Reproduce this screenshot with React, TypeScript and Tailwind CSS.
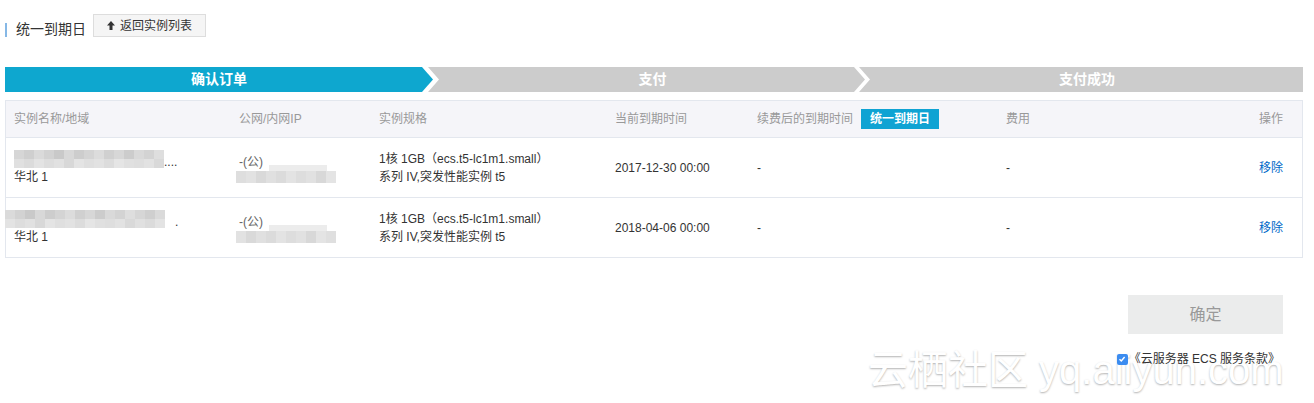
import React from 'react';

const font = "font-['Liberation_Sans','Noto_Sans_CJK_SC',sans-serif]";

const shadesA = ['#d6d6d6', '#cfcfcf', '#dadada', '#d2d2d2', '#c9c9c9', '#d8d8d8', '#cdcdcd', '#d4d4d4', '#dcdcdc', '#d0d0d0', '#d7d7d7', '#cccccc', '#d9d9d9', '#d3d3d3', '#dedede'];
const shadesB = ['#dedede', '#e2e2e2', '#d9d9d9', '#e0e0e0', '#dbdbdb', '#e3e3e3', '#dddddd', '#e1e1e1', '#d8d8d8', '#e4e4e4', '#dfdfdf', '#e2e2e2', '#dcdcdc', '#e5e5e5', '#e0e0e0'];

// blurred text placeholder, as in the screenshot
function Mosaic({ cols, offset = 0 }: { cols: number; offset?: number }) {
  return (
    <div className="flex flex-col">
      {[shadesA, shadesB].map((row, r) => (
        <div key={r} className="flex">
          {Array.from({ length: cols }).map((_, i) => (
            <div key={i} className="h-[9px] w-[10px]" style={{ backgroundColor: row[(i + offset + r * 3) % row.length] }} />
          ))}
        </div>
      ))}
    </div>
  );
}

const steps = [
  { label: '确认订单', active: true },
  { label: '支付', active: false },
  { label: '支付成功', active: false },
];

const rows = [
  { date: '2017-12-30 00:00', tail: '....', wide: false },
  { date: '2018-04-06 00:00', tail: '.', wide: true },
];

export default function App() {
  return (
    <div className={`relative min-h-[403px] bg-white pl-[5px] pr-[11px] pt-[14px] text-[#333] ${font}`}>
      <div className="pointer-events-none absolute left-[868px] top-[346px] whitespace-nowrap text-[40px] leading-[48px] text-white [text-shadow:0_1px_2px_rgba(0,0,0,0.3)]">
        云栖社区 yq.aliyun.com
      </div>

      <div className="flex h-[23px] items-center">
        <div className="mt-[8px] h-[14px] w-[2px] bg-[#86b8e6]" />
        <span className="ml-[9px] mt-[8px] text-[14px] text-[#333]">统一到期日</span>
        <button className="ml-[7px] flex h-[23px] w-[113px] items-center justify-center gap-[5px] border border-[#ddd] bg-[#f5f5f5] text-[12px] text-[#333]">
          <svg width="8" height="9" viewBox="0 0 8 9">
            <path d="M4 0 L8 4.5 H5.5 V9 H2.5 V4.5 H0 Z" fill="#333" />
          </svg>
          返回实例列表
        </button>
      </div>

      <div className="mt-[30px] flex h-[25px]">
        {steps.map((s, i) => (
          <div
            key={s.label}
            className={`flex h-full items-center justify-center text-[14px] font-bold text-white ${
              i === 0
                ? 'w-[428px] bg-[#0ea7cf] [clip-path:polygon(0_0,calc(100%_-_11px)_0,100%_50%,calc(100%_-_11px)_100%,0_100%)]'
                : i === 1
                ? '-ml-[5px] w-[437px] bg-[#cccccc] pl-[12px] [clip-path:polygon(0_0,calc(100%_-_11px)_0,100%_50%,calc(100%_-_11px)_100%,0_100%,11px_50%)]'
                : '-ml-[6px] flex-1 bg-[#cccccc] pl-[12px] [clip-path:polygon(0_0,100%_0,100%_100%,0_100%,11px_50%)]'
            }`}
          >
            {s.label}
          </div>
        ))}
      </div>

      <div className="mt-[8px] border border-[#e3e7ee] text-[12px]">
        <div className="grid h-[36px] grid-cols-[225px_140px_236px_142px_249px_1fr_100px] items-center bg-[#f5f5f9] text-[#999]">
          <div className="px-2">实例名称/地域</div>
          <div className="px-2">公网/内网IP</div>
          <div className="px-2">实例规格</div>
          <div className="px-2">当前到期时间</div>
          <div className="flex items-center gap-[8px] px-2">
            <span>续费后的到期时间</span>
            <span className="flex h-[20px] w-[78px] items-center justify-center bg-[#0fa3d3] font-bold text-white">统一到期日</span>
          </div>
          <div className="px-2">费用</div>
          <div className="pr-[19px] text-right">操作</div>
        </div>

        {rows.map((r, idx) => (
          <div key={idx} className="grid h-[60px] grid-cols-[225px_140px_236px_142px_249px_1fr_100px] items-center border-t border-[#e3e7ee] leading-[18px]">
            <div className="px-2">
              <div className={`flex items-end ${r.wide ? '-ml-[9px]' : ''}`}>
                <Mosaic cols={r.wide ? 16 : 15} offset={idx * 2} />
                <span className={`leading-[12px] ${r.wide ? 'ml-[10px]' : ''}`}>{r.tail}</span>
              </div>
              <div>华北 1</div>
            </div>
            <div className="px-2">
              <div className="flex items-end">
                <span className="text-[#666]">-(公)</span>
                <div className="mb-[-4px] ml-[6px] h-[10px] w-[58px] bg-[#ececec]" />
              </div>
              <div className="-ml-[3px] flex">
                {Array.from({ length: 10 }).map((_, i) => (
                  <div key={i} className="h-[12px] w-[10px]" style={{ backgroundColor: shadesB[(i + idx) % shadesB.length] }} />
                ))}
              </div>
            </div>
            <div className="px-2">
              <div>1核 1GB（ecs.t5-lc1m1.small）</div>
              <div>系列 IV,突发性能实例 t5</div>
            </div>
            <div className="px-2">{r.date}</div>
            <div className="px-2">-</div>
            <div className="px-2">-</div>
            <div className="pr-[19px] text-right text-[#0068c8]">移除</div>
          </div>
        ))}
      </div>

      <div className="mt-[37px] flex justify-end pr-[20px]">
        <button className="h-[39px] w-[155px] bg-[#ebecec] text-[16px] text-[#999]">确定</button>
      </div>

      <div className="relative z-10 mt-[16px] flex items-center justify-end pr-[23px] text-[12px] text-[#333]">
        <span className="flex h-[11px] w-[11px] shrink-0 items-center justify-center rounded-[2px] bg-[#3b8cf0]">
          <svg width="8" height="8" viewBox="0 0 8 8">
            <path d="M1.5 4.2 L3.3 6 L6.6 2" stroke="#fff" strokeWidth="1.4" fill="none" />
          </svg>
        </span>
        <span className="ml-[1px] whitespace-nowrap">《云服务器 ECS 服务条款》</span>
      </div>
    </div>
  );
}
